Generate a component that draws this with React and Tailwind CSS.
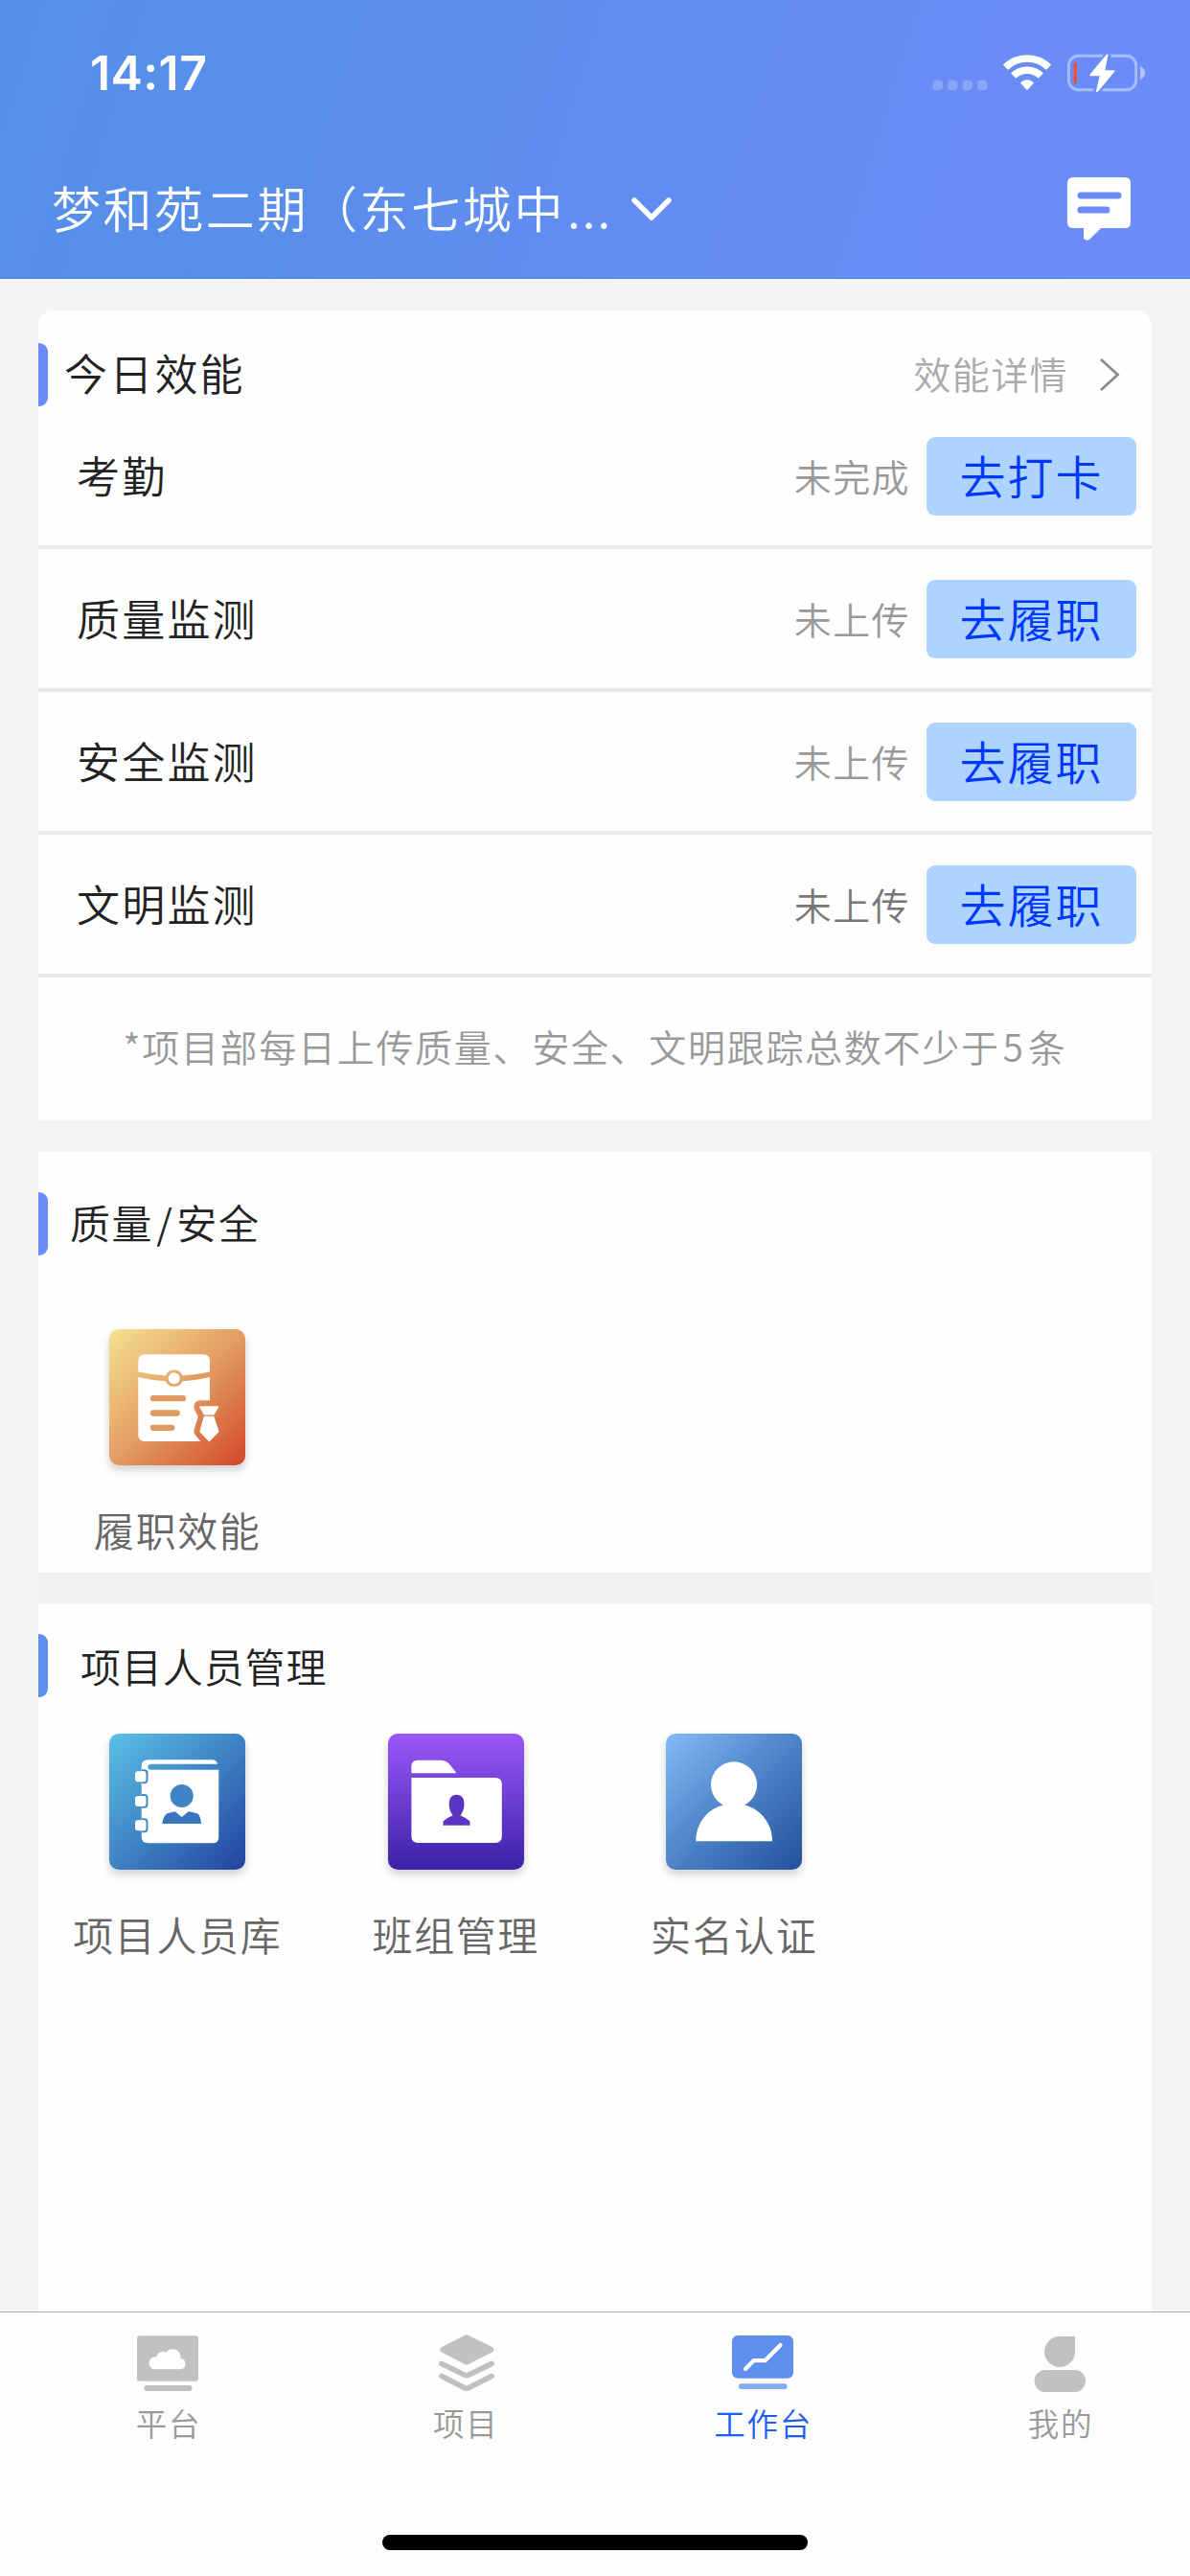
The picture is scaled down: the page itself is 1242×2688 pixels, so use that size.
import React from "react";

const INK = "text-[#222]";

function StatusBar() {
  return (
    <div className="flex h-[150px] items-start justify-between pl-[94px] pr-[47px]">
      <span className="mt-[46px] font-['Inter'] text-[50px] leading-[60px] font-semibold tracking-[0.4px]">14:17</span>
      <svg className="mt-[50px]" width="223" height="50" viewBox="972 50 223 50" fill="#fff">
        <g fillOpacity=".22">
          <rect x="973.5" y="83.7" width="10.5" height="10.6" rx="4" />
          <rect x="989" y="83.7" width="10.5" height="10.6" rx="4" />
          <rect x="1004.5" y="83.7" width="10.5" height="10.6" rx="4" />
          <rect x="1020" y="83.7" width="10.5" height="10.6" rx="4" />
        </g>
        <path d="M1049.4 70.3A32 32 0 0 1 1094.6 70.3" fill="none" stroke="#fff" strokeWidth="7.6" />
        <path d="M1057.7 79.2A20 20 0 0 1 1086.300 79.200" fill="none" stroke="#fff" strokeWidth="7.4" />
        <path d="M1064.8 86.600Q1072 79.200 1079.200 86.600L1073 93.200Q1072 94.300 1071 93.200Z" />
        <rect x="1115.400" y="58.300" width="70.300" height="35.400" rx="10" fill="none" stroke="#fff" strokeOpacity=".42" strokeWidth="2.900" />
        <path d="M1190 69v14q5-2.500 5-7t-5-7Z" fillOpacity=".5" />
        <rect x="1120.700" y="65.300" width="3" height="22" rx="1" fill="#ff4d1c" />
        <path d="M1156.500 57L1138 78.500H1148.500L1144.500 95.500L1163 74.500H1152.500Z" fill="#6b8cf7" stroke="#6b8cf7" strokeWidth="7" />
        <path d="M1155.500 57.600L1138.400 78.200H1149L1145 95L1162.500 74.200H1152Z" stroke="#fff" strokeWidth="2" strokeLinejoin="round" />
      </svg>
    </div>
  );
}

function Header() {
  return (
    <header className="h-[291px] shrink-0 border-b border-[#3f82ee] bg-[linear-gradient(107deg,#5490e8_0%,#598eea_25%,#618df0_52%,#6a8cf7_82%,#6d8cfa_100%)] text-white">
      <StatusBar />
      <div className="flex h-[136px] items-center pl-[54px] pr-[61px]">
        <span className="mb-[4px] text-[51px] leading-[60px] tracking-[2.600px]">梦和苑二期（东七城中<span className="ml-[2px] tracking-[2px]">...</span></span>
        <svg className="ml-[18px]" width="46" height="30" viewBox="0 0 46 30" fill="none">
          <path d="M5 6L23 24L41 6" stroke="#fff" strokeWidth="5.500" strokeLinecap="round" strokeLinejoin="round" />
        </svg>
        <svg className="ml-auto" width="68" height="68" viewBox="1113 185 68 68">
          <path d="M1120 186h54q6 0 6 6v41q0 6-6 6h-25l-12 12q-3 2-6-1v-11h-11q-6 0-6-6v-41q0-6 6-6Z" fill="#fff" />
          <path d="M1128 205h39M1128 220h27" stroke="#6b8cf8" strokeWidth="7" strokeLinecap="round" />
        </svg>
      </div>
    </header>
  );
}

function Marker({ className = "bg-[#6b8cf8]" }) {
  return <span className={"h-[66px] w-[10px] rounded-r-[9px] " + className} />;
}

const TASKS = [
  ["考勤", "未完成", "去打卡"],
  ["质量监测", "未上传", "去履职"],
  ["安全监测", "未上传", "去履职"],
  ["文明监测", "未上传", "去履职"],
];

function Efficiency() {
  return (
    <section className="mt-[33px] h-[845px] rounded-t-[16px] bg-[#fefefe]">
      <div className="flex h-[100px] items-end">
        <Marker />
        <h2 className={"mb-[2px] ml-[17px] text-[45px] leading-[66px] tracking-[2.200px] " + INK}>今日效能</h2>
        <span className="mb-[2px] ml-auto text-[39px] leading-[66px] tracking-[1.400px] text-[#aaa]">效能详情</span>
        <svg className="mr-[31px] ml-[30px] mb-[14px]" width="26" height="38" viewBox="0 0 26 38" fill="none">
          <path d="M4 3L21.500 19L4 35" stroke="#8c8c8c" strokeWidth="2.800" />
        </svg>
      </div>
      {TASKS.map(([name, state, action]) => (
        <div key={name} className="flex h-[149px] items-center border-b-[4px] border-[#e8e8e8] pl-[40px] pr-[16px]">
          <span className={"mb-[2px] text-[45px] leading-[66px] tracking-[2.200px] " + INK}>{name}</span>
          <span className={"mb-[2px] ml-auto text-[39px] leading-[66px] tracking-[1.400px] " + (name === "文明监测" ? "text-[#777]" : "text-[#999]")}>{state}</span>
          <button className="ml-[17px] h-[82px] w-[219px] rounded-[9px] bg-[#add3ff] pb-[4px] text-[48px] leading-[66px] tracking-[2px] text-[#0037ff]">{action}</button>
        </div>
      ))}
      <p className="text-center text-[39px] leading-[142px] tracking-[1.700px] text-[#999]">*项目部每日上传质量、安全、文明跟踪总数不少于<span className="mx-[3px]">5</span>条</p>
    </section>
  );
}

function Tile({ label, className, children }) {
  return (
    <div className="flex w-[290.5px] flex-col items-center">
      <svg className={"rounded-[10px] shadow-[0_5px_10px_rgba(0,0,0,0.18)] " + className} width="142" height="142" viewBox="0 0 142 142" fill="#fff">
        {children}
      </svg>
      <span className="mt-[37px] text-[42px] leading-[60px] tracking-[1.600px] text-[#666]">{label}</span>
    </div>
  );
}

function Quality() {
  return (
    <section className="mt-[33px] h-[439px] bg-[#fefefe]">
      <div className="flex h-[185px] items-start pt-[42px]">
        <Marker />
        <h2 className={"ml-[23px] text-[42px] leading-[61px] tracking-[1.600px] " + INK}>质量<span className="mx-[3px]">/</span>安全</h2>
      </div>
      <Tile label="履职效能" className="bg-[linear-gradient(135deg,#f5e290_0%,#e39d63_50%,#d1482a_100%)]">
        <path d="M37 26.300H98.500Q105 26.300 105 33V44.500Q90 47.500 76.500 48.500A9.500 9.500 0 0 0 58.900 48.500Q45 47.500 30.300 44.500V33Q30.300 26.300 37 26.300Z" />
        <path d="M30.300 50Q45 53.500 59 54.200A9.500 9.500 0 0 0 76.400 54.200Q90 53.500 105 50V74.300H95.500Q88.500 74.300 88.500 81Q88.500 84 92.700 91L88.600 105Q88 108 89.500 110L95.300 117H37Q30.300 117 30.300 110.500Z" />
        <circle cx="67.700" cy="51.300" r="6" />
        <path d="M46 72.200H77M46 87.500H70.700M46 102.800H65.300" stroke="#e09a61" strokeWidth="6.300" strokeLinecap="round" />
        <path d="M94.300 81.500Q94 80.300 95 80.300H113.500Q114.500 80.300 114 81.500L109.500 89.600H99Z" />
        <path d="M98.800 90.800H109.200L114.700 107L104.300 117.500L94.300 107Z" />
      </Tile>
    </section>
  );
}

function People() {
  return (
    <section className="min-h-0 flex-1 bg-[#fefefe]">
      <div className="flex h-[135px] items-start pt-[31px]">
        <Marker className="bg-[#5f8fee]" />
        <h2 className={"ml-[34px] text-[42px] leading-[66px] tracking-[0.900px] " + INK}>项目人员管理</h2>
      </div>
      <div className="flex">
        <Tile label="项目人员库" className="bg-[linear-gradient(135deg,#5ac0e6_0%,#3f83c4_50%,#2243a0_100%)]">
          <path d="M40.500 27.300H107Q112 27.300 113 31.700H44Q40.300 31.700 40.300 34.700T44 37.700H114.300V108Q114.300 114.300 108 114.300H40.500Q33.700 114.300 33.700 107.500V34Q33.700 27.300 40.500 27.300Z" />
          <g stroke="#3f8ccb" strokeWidth="2">
            <path d="M34 38.300H36.500Q39.500 38.300 39.500 41.500V48Q39.500 51.200 36.500 51.200H34" />
            <path d="M34 64H36.500Q39.500 64 39.500 67.200V73.500Q39.500 76.700 36.500 76.700H34" />
            <path d="M34 89.300H36.500Q39.500 89.300 39.500 92.500V99Q39.500 102.200 36.500 102.200H34" />
          </g>
          <rect x="27" y="39.300" width="11" height="11" rx="3" />
          <rect x="27" y="65" width="11" height="11" rx="3" />
          <rect x="27" y="90.300" width="11" height="11" rx="3" />
          <circle cx="75.700" cy="65" r="12" fill="#3f84c4" />
          <path d="M55.300 94Q56 87 60 83.500Q64 82.200 68.700 81.300L75.700 87L82.700 81.300Q88 82.200 92.500 83.500Q95.500 86.500 96 94Z" fill="#3877be" />
        </Tile>
        <Tile label="班组管理" className="bg-[linear-gradient(180deg,#9b58f9_0%,#3a21a6_100%)]">
          <path d="M24.400 41.300V34Q24.400 27.700 31 27.700H55.400Q61.500 28 65 33L71.500 41.300Z" />
          <path d="M24.400 46H112Q118.800 46 118.800 53V107Q118.800 114 112 114H31.500Q24.400 114 24.400 107Z" />
          <path d="M71.600 63.700C77 63.700 79.500 67.500 79.500 73.500C79.500 78.500 77.500 83 75.500 85.200Q81 87.500 85.400 91.500V95.700H57.500V91.500Q62 87.500 67.700 85.200C65.700 83 63.700 78.500 63.700 73.500C63.700 67.500 66.200 63.700 71.600 63.700Z" fill="#5b34c4" />
        </Tile>
        <Tile label="实名认证" className="bg-[linear-gradient(135deg,#84baf4_0%,#4d83c8_50%,#23509c_100%)]">
          <circle cx="71" cy="53.300" r="24" />
          <path d="M59.600 72H82.600V74.500C99 79 111.200 94 111.200 112.300H31.300C31.300 94 43 79 59.600 74.500Z" />
        </Tile>
      </div>
    </section>
  );
}

const GREY = "#c1c1c1";

function Tab({ label, active, children }) {
  return (
    <div className="flex w-[180px] flex-col items-center pt-[20px]">
      <svg width="70" height="66" viewBox="0 0 70 66" fill={GREY}>{children}</svg>
      <span className={"mt-[5px] pl-[2px] text-[32.500px] leading-[48px] tracking-[1.800px] " + (active ? "text-[#1a5cf5]" : "text-[#999]")}>{label}</span>
    </div>
  );
}

function TabBar() {
  return (
    <footer className="flex h-[276px] shrink-0 flex-col items-center border-t border-[#aaa] bg-[#fdfdfd]">
      <nav className="flex w-full flex-1 justify-between pl-[85px] pr-[46px]">
        <Tab label="平台">
          <rect x="3" y="4.300" width="64" height="47.400" rx="3" />
          <rect x="10.500" y="56" width="50" height="6" rx="3" />
          <path d="M22 39.300A6.500 6.500 0 0 1 22 26.300H23.500A6 6 0 0 1 33 22A8.500 8.500 0 0 1 48.500 28A5.700 5.700 0 0 1 48.500 39.300Z" fill="#fff" />
        </Tab>
        <Tab label="项目">
          <path d="M34 4.500Q37 2.200 40 4.500L63.500 16Q67.500 18.700 63.500 21.500L40 33.500Q37 35.500 34 33.500L11 21.500Q7 18.700 11 16Z" />
          <path d="M11 33.500L34.500 45Q37 46.200 39.500 45L63 33.500M11 46.500L34.500 58.500Q37 59.700 39.500 58.500L63 46.500" fill="none" stroke={GREY} strokeWidth="5.800" strokeLinecap="round" />
        </Tab>
        <Tab label="工作台" active>
          <rect x="3" y="4" width="64" height="44.700" rx="6" fill="#5f8fee" />
          <rect x="10" y="54.300" width="50.500" height="5.700" rx="2.800" fill="#86abf6" />
          <path d="M17 39L25.500 30.200H37.500L53.500 14" fill="none" stroke="#fff" strokeWidth="4.200" strokeLinecap="round" strokeLinejoin="round" />
        </Tab>
        <Tab label="我的">
          <path d="M35 5H51V21A16 16 0 1 1 35 5Z" />
          <rect x="8.600" y="40" width="53.400" height="23" rx="11.500" />
        </Tab>
      </nav>
      <div className="mb-[27px] h-[16px] w-[444px] rounded-full bg-black" />
    </footer>
  );
}

export default function App() {
  return (
    <div className="flex h-[2688px] w-[1242px] flex-col bg-[#f4f4f4] font-['Noto_Sans_CJK_SC',sans-serif] font-[350]">
      <Header />
      <main className="mx-[40px] flex min-h-0 flex-1 flex-col">
        <Efficiency />
        <Quality />
        <div className="h-[33px] shrink-0 bg-[#f1f1f1]" />
        <People />
      </main>
      <TabBar />
    </div>
  );
}
